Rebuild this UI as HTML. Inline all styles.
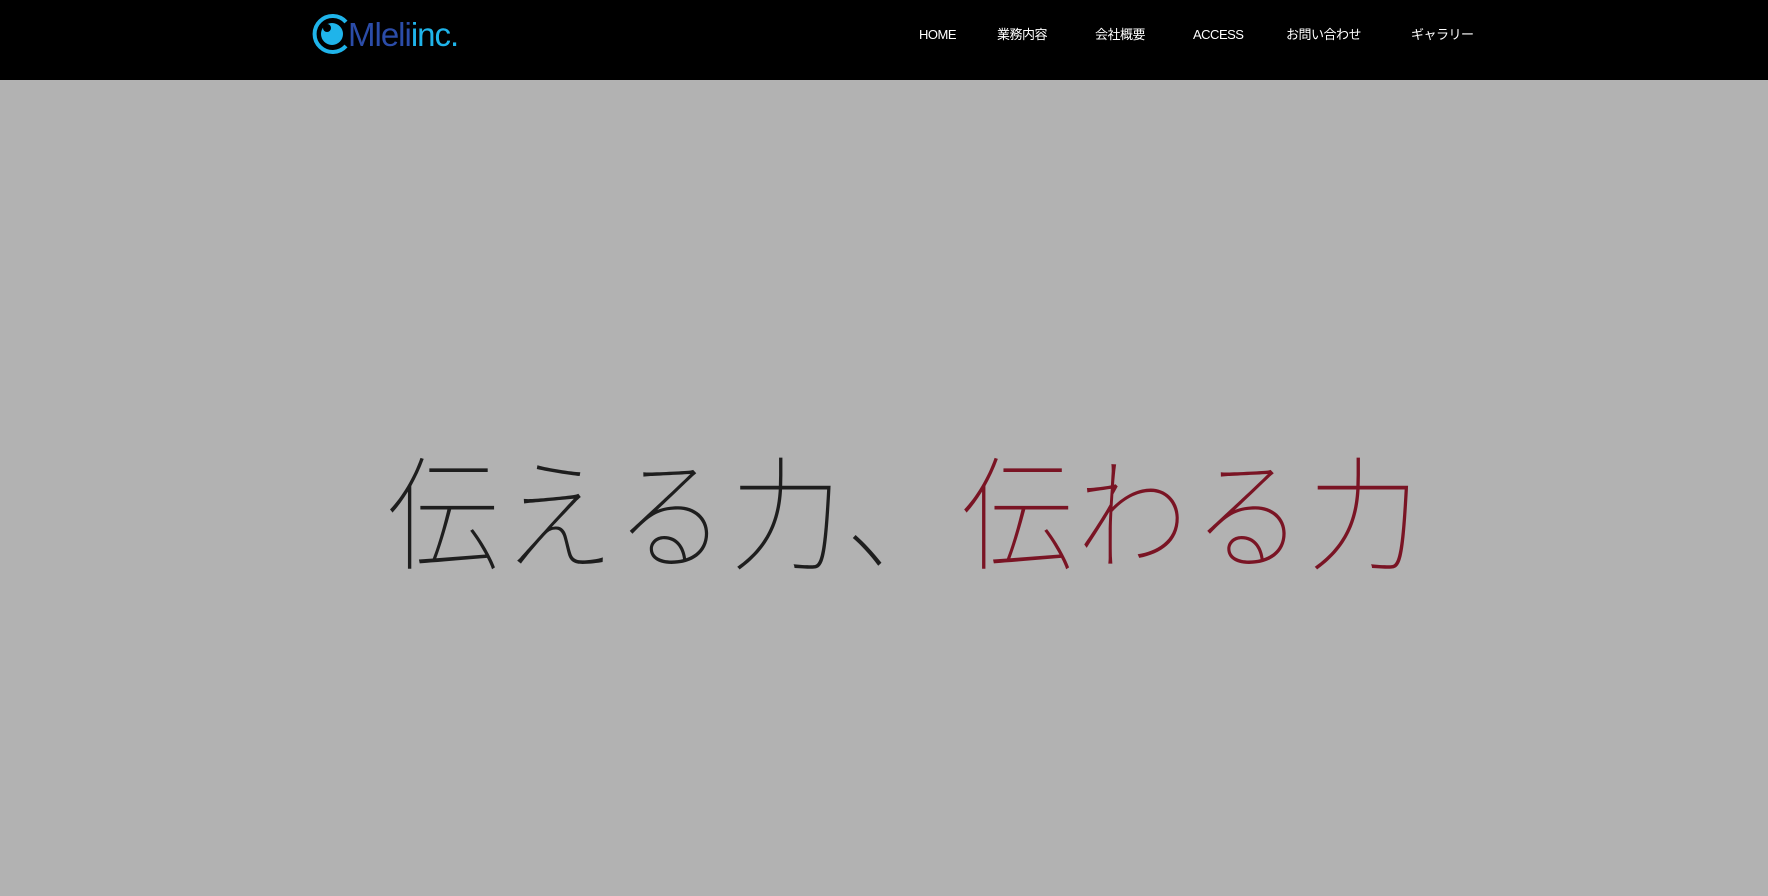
<!DOCTYPE html>
<html><head><meta charset="utf-8"><style>
html,body{margin:0;padding:0;width:1768px;height:896px;overflow:hidden;background:#b2b2b2;}
.hd{position:absolute;left:0;top:0;width:1768px;height:80px;background:#000;}
.logo{position:absolute;left:310px;top:12px;height:44px;}
.lt{position:absolute;left:348px;top:13px;font-family:"Liberation Sans",sans-serif;font-size:33px;line-height:44px;letter-spacing:-1px;}
.nav a{position:absolute;top:25px;color:#fff;font-family:"Liberation Sans","Noto Sans CJK JP",sans-serif;font-size:13px;line-height:20px;text-decoration:none;white-space:nowrap;letter-spacing:-0.5px;}
.hl{position:absolute;left:387px;top:444px;width:1100px;white-space:nowrap;font-family:"Noto Sans CJK JP",sans-serif;font-weight:100;font-size:112px;line-height:140px;letter-spacing:3.5px;color:#1e1e1e;transform:scaleY(1.1);transform-origin:0 100%;}
.hl span{color:#7a1424;}
</style></head><body>
<div class="hd">
<svg class="logo" width="44" height="44" viewBox="0 0 44 44">
<path d="M36 10 A18 18 0 1 0 36 34" fill="none" stroke="#1fb4ea" stroke-width="4"/>
<circle cx="22" cy="22" r="11" fill="#1fb4ea"/>
<circle cx="17" cy="16" r="4" fill="#000"/>
</svg>
<div class="lt"><span style="color:#2b4ca8">Mleli</span><span style="color:#1fb4ea">inc.</span></div>
<div class="nav">
<a style="left:919px">HOME</a>
<a style="left:997px">業務内容</a>
<a style="left:1095px">会社概要</a>
<a style="left:1193px">ACCESS</a>
<a style="left:1286px">お問い合わせ</a>
<a style="left:1411px">ギャラリー</a>
</div>
</div>
<div class="hl">伝える力、<span>伝わる力</span></div>
</body></html>
